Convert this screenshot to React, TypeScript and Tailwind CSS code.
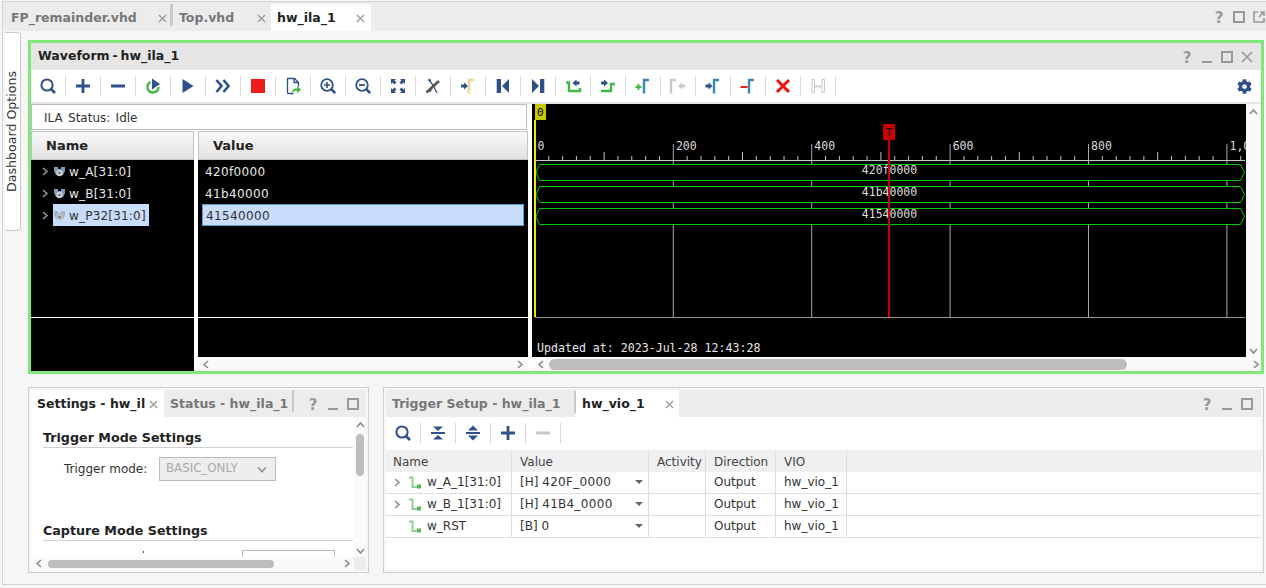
import React from "react";
import { FaCog } from "react-icons/fa";

const NAVY = "#2f5088";
const BLUE = "#3d86bb";
const GREEN = "#43b843";

const Arrow = ({ x = 2, dir = 1, color = NAVY, dy = 0 }: { x?: number; dir?: number; color?: string; dy?: number }) => (
  <polygon
    transform={`translate(0 ${dy})`}
    points={
      dir > 0
        ? `${x},8.5 ${x + 3},8.5 ${x + 3},6.5 ${x + 7},10 ${x + 3},13.5 ${x + 3},11.5 ${x},11.5`
        : `${x + 7},8.5 ${x + 4},8.5 ${x + 4},6.5 ${x},10 ${x + 4},13.5 ${x + 4},11.5 ${x + 7},11.5`
    }
    fill={color}
  />
);

const Gamma = ({ x = 11, color = BLUE }: { x?: number; color?: string }) => (
  <path d={`M${x + 1} 17.5V4h5`} fill="none" stroke={color} strokeWidth="2.4" />
);

const searchIcon = (
  <>
    <circle cx="9" cy="9" r="5.6" fill="none" stroke={NAVY} strokeWidth="2" />
    <path d="M13 13l4 4" stroke={NAVY} strokeWidth="2.6" />
  </>
);
const plusIcon = <path d="M3 8.6h5.6V3h2.8v5.6H17v2.8h-5.6V17H8.6v-5.6H3z" fill={NAVY} />;
const minusIcon = <rect x="3" y="8.5" width="14" height="3" fill={NAVY} />;

const waveTools: React.ReactNode[] = [
  searchIcon,
  plusIcon,
  minusIcon,
  <>
    <path d="M7.500 6A5.500 5.500 0 1 0 15.500 11" fill="none" stroke={GREEN} strokeWidth="2.4" />
    <polygon points="9,2.5 17,8 9,13.500" fill={NAVY} />
  </>,
  <polygon points="4.5,3 15.5,10 4.5,17" fill={NAVY} />,
  <path d="M3.5 4l5 6-5 6M10.5 4l5 6-5 6" fill="none" stroke={NAVY} strokeWidth="2.6" />,
  <rect x="3" y="3" width="14" height="14" fill="#ee1c1c" />,
  <>
    <path d="M4.5 17.5V2.5h7l4 4v4M11 2.5v4h4.5M4.5 17.5h6" fill="none" stroke={NAVY} strokeWidth="1.3" />
    <path d="M9 17c0-3.500 2.500-4.500 5-4.500V10l4 3.800-4 3.500v-2.500c-2 0-3.500.5-5 2.200z" fill={GREEN} />
  </>,
  <>
    <circle cx="9" cy="9" r="5.8" fill="none" stroke={NAVY} strokeWidth="1.8" />
    <path d="M6 9h6M9 6v6" stroke={NAVY} strokeWidth="1.6" />
    <path d="M13.200 13.200l4 4" stroke={NAVY} strokeWidth="2.6" />
  </>,
  <>
    <circle cx="9" cy="9" r="5.8" fill="none" stroke={NAVY} strokeWidth="1.8" />
    <path d="M6 9h6" stroke={NAVY} strokeWidth="1.8" />
    <path d="M13.200 13.200l4 4" stroke={NAVY} strokeWidth="2.6" />
  </>,
  <g fill={NAVY}>
    <polygon points="3,3 8,3 6.500,4.500 8.500,6.500 6.500,8.500 4.500,6.500 3,8" />
    <polygon points="17,3 12,3 13.500,4.500 11.500,6.500 13.500,8.500 15.500,6.500 17,8" />
    <polygon points="3,17 8,17 6.500,15.500 8.500,13.500 6.500,11.500 4.500,13.500 3,12" />
    <polygon points="17,17 12,17 13.500,15.500 11.500,13.500 13.500,11.500 15.500,13.500 17,12" />
  </g>,
  <>
    <path d="M6 4l4 5 4 8M5 4h3M10 9l-3 7" fill="none" stroke={NAVY} strokeWidth="1.3" />
    <path d="M3.500 16.500L16 5" stroke="#555" strokeWidth="2.6" />
  </>,
  <>
    <Arrow x={3} />
    <Gamma x={10} color="#ecd98e" />
  </>,
  <>
    <rect x="3.700" y="3" width="4.300" height="14" fill={NAVY} />
    <polygon points="16,3 16,17 9,10" fill={NAVY} />
  </>,
  <>
    <rect x="12" y="3" width="4.300" height="14" fill={NAVY} />
    <polygon points="4,3 4,17 11,10" fill={NAVY} />
  </>,
  <>
    <path d="M3 6.500h3V15h11v-3" fill="none" stroke={GREEN} strokeWidth="2.4" />
    <Arrow x={9.500} dir={-1} dy={-3} />
  </>,
  <>
    <path d="M3 15h10V8h4" fill="none" stroke={GREEN} strokeWidth="2.4" />
    <Arrow x={3} dy={-3} />
  </>,
  <>
    <path d="M2.500 11h6M5.500 8v6" stroke={GREEN} strokeWidth="2" />
    <Gamma x={10} />
  </>,
  <>
    <Gamma x={2} color="#c9c9c9" />
    <Arrow x={10} dir={-1} color="#c9c9c9" />
  </>,
  <>
    <Arrow x={2.500} />
    <Gamma x={10} />
  </>,
  <>
    <path d="M2.500 11h7" stroke="#ee1c1c" strokeWidth="2" />
    <Gamma x={10} />
  </>,
  <path d="M4 4l12 12M16 4L4 16" stroke="#ee1010" strokeWidth="3" />,
  <>
    <path d="M4 3.500h2.500v13H4zM14 3.500h2.500v13H14z" fill="none" stroke="#c9c9c9" strokeWidth="1" />
    <path d="M7 10.500h6M8.500 9l-1.500 1.500L8.500 12M11.500 9l1.500 1.500-1.500 1.500" fill="none" stroke="#c9c9c9" strokeWidth="1" />
  </>,
];

const vioTools: React.ReactNode[] = [
  searchIcon,
  <path d="M3 9h14v2H3zM5 3.500h10L10 8zM5 16.500h10L10 12z" fill={NAVY} />,
  <path d="M3 9h14v2H3zM10 2.500l5 5H5zM10 17.500l-5-5h10z" fill={NAVY} />,
  plusIcon,
  <rect x="3" y="8.500" width="14" height="3" fill="#c9c9c9" />,
];

const Toolbar = ({ tools }: { tools: React.ReactNode[] }) => (
  <div className="flex items-center h-full">
    {tools.map((t, i) => (
      <React.Fragment key={i}>
        <svg width="20" height="20" viewBox="0 0 20 20" className="mx-[7px]">
          {t}
        </svg>
        <span className="w-px h-[20px] bg-[#d8d8d8]" />
      </React.Fragment>
    ))}
  </div>
);

const PanelIcon = ({ kind }: { kind: string }) => (
  <svg width="14" height="14" viewBox="0 0 14 14" className="text-[#999] overflow-visible">
    {kind === "min" && <rect x="2" y="11" width="10" height="2" fill="currentColor" />}
    {kind === "max" && <rect x="2" y="2" width="10" height="10" fill="none" stroke="currentColor" strokeWidth="2" />}
    {kind === "close" && <path d="M2 2l10 10M12 2L2 12" stroke="currentColor" strokeWidth="1.6" />}
    {kind === "float" && (
      <path d="M6 2H2v10h10V8M8 2h4v4M12 2L7 7" fill="none" stroke="currentColor" strokeWidth="1.6" />
    )}
    {kind === "help" && (
      <text x="7" y="12.500" textAnchor="middle" fontSize="15" fontWeight="700" fill="currentColor" fontFamily="DejaVu Sans">
        ?
      </text>
    )}
  </svg>
);

const PanelIcons = ({ kinds }: { kinds: string[] }) => (
  <div className="flex items-center gap-[6px]">
    {kinds.map((k) => (
      <PanelIcon key={k} kind={k} />
    ))}
  </div>
);

const CloseX = ({ className = "" }: { className?: string }) => (
  <svg width="9" height="9" viewBox="0 0 9 9" className={className}>
    <path d="M1 1l7 7M8 1L1 8" stroke="#999" strokeWidth="1.300" />
  </svg>
);

const Chevron = ({ color = "#888", dir = "right", size = 9 }: { color?: string; dir?: string; size?: number }) => {
  const d = {
    right: "M3 1l4 3.500L3 8",
    left: "M6 1L2 4.500 6 8",
    up: "M1 6l3.500-4L8 6",
    down: "M1 3l3.500 4L8 3",
  }[dir];
  return (
    <svg width={size} height={size} viewBox="0 0 9 9" className="shrink-0">
      <path d={d} fill="none" stroke={color} strokeWidth="1.500" />
    </svg>
  );
};

const ProbeIcon = ({ dim = false }: { dim?: boolean }) => (
  <svg width="13" height="12" viewBox="0 0 13 12" className="shrink-0">
    <path d="M1 1h4v2h3V1h4v4l-2 4H3L1 5z" fill={dim ? "#a3b5c4" : "#7b9ab5"} />
    <circle cx="6.500" cy="7" r="3.200" fill={dim ? "#c0c0c0" : "#d0d0d0"} />
    <circle cx="6.500" cy="7" r="1.300" fill="#777" />
  </svg>
);

const names = [
  { label: "w_A[31:0]", value: "420f0000", hex: 164.5 },
  { label: "w_B[31:0]", value: "41b40000", hex: 186.5 },
  { label: "w_P32[31:0]", value: "41540000", hex: 208.5 },
];

const HeaderCell = ({ children }: { children: React.ReactNode }) => (
  <div className="h-[29px] shrink-0 flex items-center pl-[14px] text-[13px] font-bold text-[#222] border border-[#c4c4c4] bg-gradient-to-b from-[#fafafa] to-[#e2e2e2]">
    {children}
  </div>
);

const originX = 534.9;
const pxPerStep = 13.84;

const WaveChart = () => {
  const ticks = Array.from({ length: 52 }, (_, i) => i);
  return (
    <svg
      width="714"
      height="253"
      viewBox="532 104 714 253"
      className="block shrink-0 bg-black"
      fontFamily="DejaVu Sans Mono"
    >
      {ticks.map((i) => {
        const x = originX + i * pxPerStep;
        if (i % 10 === 0)
          return <line key={i} x1={x} x2={x} y1="144" y2="317" stroke="#a8a8a8" />;
        return (
          <line key={i} x1={x} x2={x} y1={i % 5 === 0 ? 152 : 156} y2="160" stroke="#c4c4c4" />
        );
      })}
      <line x1="535" x2="1245" y1="160.500" y2="160.500" stroke="#c4c4c4" />
      <line x1="535" x2="1245" y1="317.500" y2="317.500" stroke="#999" />
      {["0", "200", "400", "600", "800", "1,000"].map((t, i) => (
        <text key={t} x={537.5 + i * 138.4} y="150" fontSize="11.500" fill="#dcdcdc">
          {t}
        </text>
      ))}
      {names.map((n) => (
        <g key={n.label}>
          <polygon
            points={`539.500,${n.hex} 536,${n.hex + 8} 539.500,${n.hex + 16} 1240.500,${n.hex + 16} 1244.500,${n.hex + 8} 1240.500,${n.hex}`}
            fill="#000"
            stroke="#00c800"
          />
          <text x="889.500" y={n.hex + 9} textAnchor="middle" fontSize="11.500" fill="#dcdcdc">
            {n.value}
          </text>
        </g>
      ))}
      <rect x="534" y="120" width="2" height="197" fill="#e8e800" />
      <rect x="535" y="104" width="11" height="16" fill="#c8c800" />
      <text x="537" y="116" fontSize="11" fill="#000">
        0
      </text>
      <rect x="888" y="140" width="2" height="177" fill="#cc0000" />
      <rect x="883" y="124" width="12" height="16" fill="#cc0000" />
      <text x="889" y="136" textAnchor="middle" fontSize="11" fill="#000">
        T
      </text>
      <text x="537" y="352" fontSize="11.600" fill="#e8e8e8">
        Updated at: 2023-Jul-28 12:43:28
      </text>
    </svg>
  );
};

const TopTab = ({ label, active, className }: { label: string; active?: boolean; className: string }) => (
  <div
    className={`flex items-center justify-between h-[27px] pt-px text-[12.5px] font-bold ${
      active ? "bg-white text-[#222]" : "text-[#777]"
    } ${className}`}
  >
    <span>{label}</span>
    <CloseX />
  </div>
);

const VioSignal = () => (
  <svg width="13" height="13" viewBox="0 0 13 13" className="shrink-0">
    <path d="M0 1.500h3.500V11H9" fill="none" stroke="#8fd08f" strokeWidth="2" />
    <rect x="8" y="8.500" width="4" height="4" fill="#58b558" />
  </svg>
);

const vioRows = [
  { name: "w_A_1", bus: "[31:0]", value: "[H]", num: "420F_0000", expand: true },
  { name: "w_B_1", bus: "[31:0]", value: "[H]", num: "41B4_0000", expand: true },
  { name: "w_RST", bus: "", value: "[B]", num: "0", expand: false },
];

const colW = ["w-[126px]", "w-[137px]", "w-[57px]", "w-[70px]", "w-[71px]"];

export default function App() {
  return (
    <div className="w-[1266px] h-[588px] overflow-hidden bg-[#f6f6f6] pt-px pl-[2px] font-['DejaVu_Sans',sans-serif] text-[12px] text-[#333]">
      <div className="h-[584px] border-l border-t border-b border-[#d4d4d4] flex flex-col">
        <div className="h-[29px] shrink-0 bg-[#ececec] flex items-end">
          <TopTab label="FP_remainder.vhd" className="w-[167px] pl-[8px] pr-[3px]" />
          <span className="w-[3px] h-[22px] mb-[5px] bg-[#c8c8c8]" />
          <TopTab label="Top.vhd" className="w-[98px] pl-[6px] pr-[5px]" />
          <TopTab label="hw_ila_1" active className="w-[100px] pl-[6px] pr-[6px]" />
          <div className="ml-auto self-center">
            <PanelIcons kinds={["help", "max", "float"]} />
          </div>
        </div>

        <div className="flex flex-1 min-h-0">
          <div className="w-[25px] shrink-0 pl-[2px] pt-px">
            <div className="w-[16px] h-[199px] bg-white border border-l-0 border-[#c8c8c8] rounded-r-[4px] flex items-center justify-center">
              <span className="[writing-mode:vertical-rl] rotate-180 whitespace-nowrap text-[12.600px] text-[#333]">
                Dashboard Options
              </span>
            </div>
          </div>

          <div className="w-[1236px] shrink-0 pt-[9px] flex flex-col gap-[13px]">
            <section className="h-[334px] shrink-0 border-[3px] border-[#80e87a] flex flex-col bg-white">
              <div className="h-[27px] shrink-0 bg-[#e6e6e6] flex items-center justify-between pl-[7px] pr-[7px]">
                <span className="text-[12.5px] font-bold text-[#222] [word-spacing:-1.500px]">Waveform - hw_ila_1</span>
                <PanelIcons kinds={["help", "min", "max", "close"]} />
              </div>
              <div className="h-[34px] shrink-0 border-b-2 border-[#e6e6e6] flex items-center justify-between pr-[9px]">
                <Toolbar tools={waveTools} />
                <FaCog size={15} color={NAVY} />
              </div>
              <div className="flex flex-1 min-h-0">
                <div className="w-[501px] shrink-0 flex flex-col">
                  <div className="w-[496px] h-[26px] shrink-0 border border-[#bcbcbc] flex items-center pl-[12px] pt-px [word-spacing:1.500px]">
                    ILA Status: Idle
                  </div>
                  <div className="flex flex-1 min-h-0 mt-px">
                    <div className="w-[163px] shrink-0 flex flex-col">
                      <HeaderCell>Name</HeaderCell>
                      <div className="flex-1 bg-black text-[#e8e8e8] tracking-[0.2px]">
                        {names.map((n, i) => (
                          <div key={n.label} className="h-[22px] flex items-center pl-[9px]">
                            <Chevron color="#999" />
                            <div
                              className={`ml-[4px] h-[22px] pt-px flex items-center gap-[3px] pr-[3px] ${
                                i === 2 ? "bg-[#c8dcfb] text-[#333]" : ""
                              }`}
                            >
                              <ProbeIcon dim={i === 2} />
                              <span>{n.label}</span>
                            </div>
                          </div>
                        ))}
                        <div className="h-[92px] border-b border-white" />
                      </div>
                    </div>
                    <div className="w-[4px] shrink-0" />
                    <div className="w-[330px] shrink-0 flex flex-col">
                      <HeaderCell>Value</HeaderCell>
                      <div className="flex-1 bg-black text-[#e8e8e8] tracking-[0.35px]">
                        {names.map((n, i) => (
                          <div
                            key={n.value}
                            className={
                              i === 2
                                ? "h-[22px] ml-[4px] mr-[4px] pl-[3px] pt-px flex items-center bg-[#c8dcfb] text-[#333] border border-[#5a9ed6]"
                                : "h-[22px] pl-[7px] pt-px flex items-center"
                            }
                          >
                            {n.value}
                          </div>
                        ))}
                        <div className="h-[92px] border-b border-white" />
                      </div>
                      <div className="h-[14px] shrink-0 bg-[#fafafa] flex items-center justify-between px-[4px]">
                        <Chevron dir="left" />
                        <Chevron dir="right" />
                      </div>
                    </div>
                  </div>
                </div>

                <div className="flex-1 min-w-0 flex flex-col">
                  <div className="flex">
                    <WaveChart />
                    <div className="flex-1 bg-[#fafafa] flex flex-col items-center justify-between pt-[4px] pb-[2px]">
                      <Chevron dir="up" />
                      <Chevron dir="down" />
                    </div>
                  </div>
                  <div className="h-[14px] shrink-0 bg-[#fafafa] flex items-center pl-[5px] pr-[1px]">
                    <Chevron dir="left" />
                    <div className="ml-[3px] w-[578px] h-[11px] rounded-full bg-[#bdbdbd]" />
                    <div className="ml-auto">
                      <Chevron dir="right" />
                    </div>
                  </div>
                </div>
              </div>
            </section>

            <div className="flex h-[186px] shrink-0 gap-[14px]">
              <section className="w-[341px] shrink-0 border border-[#cfcfcf] p-[2px] flex flex-col">
                <div className="h-[27px] shrink-0 bg-[#ececec] flex items-center">
                  <div className="w-[133px] h-full pt-px bg-white flex items-center justify-between pl-[6px] pr-[6px] text-[12.5px] font-bold text-[#222] overflow-hidden whitespace-nowrap">
                    <span>Settings - hw_il</span>
                    <CloseX />
                  </div>
                  <span className="ml-[6px] pt-px text-[12.5px] font-bold text-[#777] whitespace-nowrap">Status - hw_ila_1</span>
                  <span className="ml-[4px] w-[2px] h-[22px] self-start bg-[#c8c8c8]" />
                  <div className="ml-auto pr-[6px]">
                    <PanelIcons kinds={["help", "min", "max"]} />
                  </div>
                </div>
                <div className="flex flex-1 min-h-0">
                  <div className="w-[323px] shrink-0 overflow-hidden bg-white pl-[12px] pt-[13px]">
                    <div className="w-[310px] h-[18px] border-b border-[#cfcfcf] text-[12.700px] font-bold text-[#222] leading-[16px]">
                      Trigger Mode Settings
                    </div>
                    <div className="flex items-center mt-[9px] ml-[21px]">
                      <span className="w-[95px] shrink-0">Trigger mode:</span>
                      <div className="w-[117px] h-[24px] bg-[#eeeeee] border border-[#bcbcbc] flex items-center justify-between pl-[6px] pr-[8px] text-[#aaa] text-[11.800px]">
                        <span>BASIC_ONLY</span>
                        <Chevron dir="down" color="#999" size={10} />
                      </div>
                    </div>
                    <div className="w-[310px] h-[18px] mt-[42px] border-b border-[#cfcfcf] text-[12.700px] font-bold text-[#222] leading-[16px]">
                      Capture Mode Settings
                    </div>
                    <div className="flex items-start mt-[9px]">
                      <span className="ml-[100px] mt-[1px] w-px h-[2px] bg-[#555]" />
                      <div className="ml-[98px] w-[93px] h-[20px] border border-[#bcbcbc]" />
                    </div>
                  </div>
                  <div className="flex-1 bg-[#fafafa] flex flex-col items-center pt-[4px]">
                    <Chevron dir="up" />
                    <div className="mt-[4px] w-[8px] h-[42px] rounded-full bg-[#bdbdbd]" />
                    <div className="mt-auto mb-[2px]">
                      <Chevron dir="down" />
                    </div>
                  </div>
                </div>
                <div className="h-[13px] shrink-0 flex">
                  <div className="w-[323px] shrink-0 bg-[#fafafa] flex items-center pl-[4px] pr-[3px]">
                    <Chevron dir="left" />
                    <div className="ml-[4px] w-[226px] h-[8px] rounded-full bg-[#bdbdbd]" />
                    <div className="ml-auto">
                      <Chevron dir="right" />
                    </div>
                  </div>
                  <div className="flex-1 bg-[#ececec]" />
                </div>
              </section>

              <section className="w-[881px] shrink-0 border border-[#cfcfcf] p-[2px] flex flex-col">
                <div className="h-[27px] shrink-0 bg-[#ececec] flex items-center">
                  <span className="ml-[6px] pt-px w-[182px] text-[12.5px] font-bold text-[#777] whitespace-nowrap">
                    Trigger Setup - hw_ila_1
                  </span>
                  <span className="w-[2px] h-[22px] self-start mt-[1px] bg-[#c8c8c8]" />
                  <div className="w-[103px] h-full pt-px bg-white flex items-center justify-between pl-[6px] pr-[5px] text-[12.5px] font-bold text-[#222]">
                    <span>hw_vio_1</span>
                    <CloseX />
                  </div>
                  <div className="ml-auto pr-[7px]">
                    <PanelIcons kinds={["help", "min", "max"]} />
                  </div>
                </div>
                <div className="h-[33px] shrink-0 bg-white pb-px">
                  <Toolbar tools={vioTools} />
                </div>
                <div className="flex-1 bg-white">
                  <div className="h-[22px] bg-[#f0f0f0] flex text-[#444]">
                    {["Name", "Value", "Activity", "Direction", "VIO"].map((h, i) => (
                      <div
                        key={h}
                        className={`${colW[i]} shrink-0 flex items-center ${i === 0 ? "pl-[7px]" : "pl-[8px]"} pt-[2px] border-r border-[#dedede]`}
                      >
                        {h}
                      </div>
                    ))}
                  </div>
                  {vioRows.map((r) => (
                    <div key={r.name} className="h-[22px] flex border-b border-[#dedede]">
                      <div className={`${colW[0]} shrink-0 flex items-center pl-[6px] pb-px border-r border-[#dedede]`}>
                        <span className="w-[9px] shrink-0">{r.expand && <Chevron />}</span>
                        <span className="ml-[8px] mr-[5px] shrink-0">
                          <VioSignal />
                        </span>
                        <span className="whitespace-nowrap">
                          {r.name}
                          {r.bus}
                        </span>
                      </div>
                      <div className={`${colW[1]} shrink-0 flex items-center pl-[8px] pr-[4px] pb-px border-r border-[#dedede]`}>
                        <span>{r.value}&nbsp;</span>
                        <span className="tracking-[0.3px]">{r.num}</span>
                        <span className="ml-auto mr-[1px] w-0 h-0 border-x-[4px] border-x-transparent border-t-[4px] border-t-[#666]" />
                      </div>
                      <div className={`${colW[2]} shrink-0 border-r border-[#dedede]`} />
                      <div className={`${colW[3]} shrink-0 flex items-center pl-[8px] pb-px border-r border-[#dedede]`}>Output</div>
                      <div className={`${colW[4]} shrink-0 flex items-center pl-[8px] pb-px border-r border-[#dedede]`}>hw_vio_1</div>
                    </div>
                  ))}
                </div>
              </section>
            </div>
          </div>
        </div>
      </div>
    </div>
  );
}
